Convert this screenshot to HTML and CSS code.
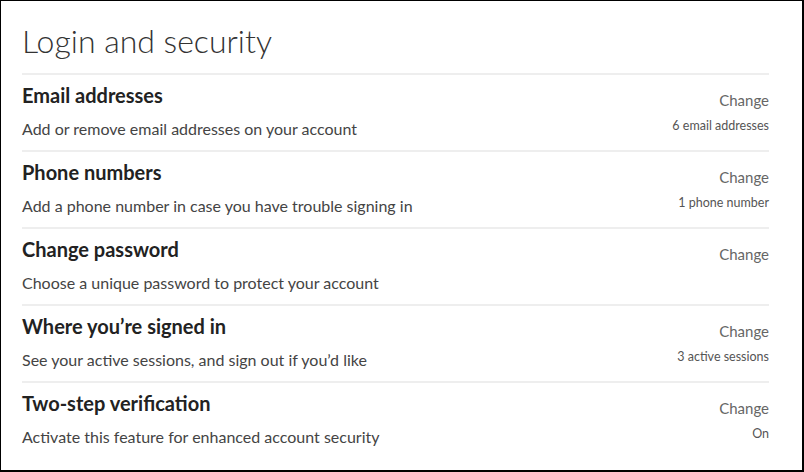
FILE: index.html
```html
<!DOCTYPE html>
<html>
<head>
<meta charset="utf-8">
<link rel="stylesheet" href="styles.css">
</head>
<body>
<div class="frame">
  <h1 class="title">Login and security</h1>
  <ul class="list">
    <li class="row">
      <div class="main">
        <div class="name">Email addresses</div>
        <div class="desc">Add or remove email addresses on your account</div>
      </div>
      <div class="side">
        <div class="action">Change</div>
        <div class="meta">6 email addresses</div>
      </div>
    </li>
    <li class="row">
      <div class="main">
        <div class="name">Phone numbers</div>
        <div class="desc">Add a phone number in case you have trouble signing in</div>
      </div>
      <div class="side">
        <div class="action">Change</div>
        <div class="meta">1 phone number</div>
      </div>
    </li>
    <li class="row">
      <div class="main">
        <div class="name">Change password</div>
        <div class="desc">Choose a unique password to protect your account</div>
      </div>
      <div class="side">
        <div class="action">Change</div>
        <div class="meta"></div>
      </div>
    </li>
    <li class="row">
      <div class="main">
        <div class="name">Where you’re signed in</div>
        <div class="desc">See your active sessions, and sign out if you’d like</div>
      </div>
      <div class="side">
        <div class="action">Change</div>
        <div class="meta">3 active sessions</div>
      </div>
    </li>
    <li class="row">
      <div class="main">
        <div class="name">Two-step verification</div>
        <div class="desc">Activate this feature for enhanced account security</div>
      </div>
      <div class="side">
        <div class="action">Change</div>
        <div class="meta">On</div>
      </div>
    </li>
  </ul>
</div>
</body>
</html>
```
FILE: styles.css
```css
html, body {
  margin: 0;
  padding: 0;
  background: #fff;
}
.frame {
  box-sizing: border-box;
  width: 804px;
  height: 472px;
  border-top: 1px solid #000;
  border-left: 1px solid #000;
  border-right: 2px solid #000;
  border-bottom: 2px solid #000;
  padding: 0 33px 0 21px;
  font-family: "Source Sans Pro", "Lato", "Liberation Sans", sans-serif;
  background: #fff;
}
.title {
  margin: 0;
  padding-top: 20px;
  height: 72px;
  box-sizing: border-box;
  font-size: 32px;
  line-height: 40px;
  font-weight: 300;
  color: #333;
}
.list {
  list-style: none;
  margin: 0;
  padding: 0;
}
.row {
  display: flex;
  justify-content: space-between;
  border-top: 2px solid #eeeeee;
  height: 77px;
  box-sizing: border-box;
}
.main {
  padding-top: 8px;
}
.name {
  font-size: 20px;
  line-height: 24px;
  font-weight: 700;
  color: #222;
}
.desc {
  margin-top: 12px;
  font-size: 16px;
  line-height: 20px;
  color: #444;
}
.side {
  text-align: right;
  padding-top: 16px;
}
.action {
  font-size: 15px;
  line-height: 18px;
  color: #666;
}
.meta {
  margin-top: 10px;
  font-size: 12.5px;
  line-height: 14px;
  color: #555;
}
```
